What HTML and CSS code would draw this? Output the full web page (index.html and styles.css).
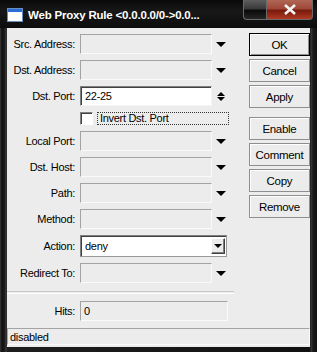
FILE: index.html
```html
<!DOCTYPE html>
<html>
<head>
	<title>Web Proxy Rule</title>
	<meta charset="utf-8">
	<link rel="stylesheet" href="styles.css">
</head>
<body>
	<div class="window">
		<div class="titlebar">
			<div class="appicon"></div>
			<div class="caption">Web Proxy Rule &lt;0.0.0.0/0-&gt;0.0...</div>
			<div class="capbtns">
				<div class="capbtn-min"></div>
				<div class="capbtn-close">
					<svg width="14" height="11" viewBox="0 0 14 11"><path d="M2 1 L12 10 M12 1 L2 10" stroke="#f4f4f4" stroke-width="2.6" fill="none"/></svg>
				</div>
			</div>
		</div>
		<div class="client">
			<div class="main">
				<div class="form">
					<div class="row">
						<label>Src. Address:</label>
						<div class="field off"></div>
						<div class="arrow"><span class="tri-down"></span></div>
					</div>
					<div class="row">
						<label>Dst. Address:</label>
						<div class="field off"></div>
						<div class="arrow"><span class="tri-down"></span></div>
					</div>
					<div class="row">
						<label>Dst. Port:</label>
						<div class="field on">22-25</div>
						<div class="arrow spin"><span class="tri-up"></span><span class="tri-down"></span></div>
					</div>
					<div class="row check-row">
						<label></label>
						<div class="checkbox"></div>
						<div class="focus">Invert Dst. Port</div>
					</div>
					<div class="row">
						<label>Local Port:</label>
						<div class="field off"></div>
						<div class="arrow"><span class="tri-down"></span></div>
					</div>
					<div class="row">
						<label>Dst. Host:</label>
						<div class="field off"></div>
						<div class="arrow"><span class="tri-down"></span></div>
					</div>
					<div class="row">
						<label>Path:</label>
						<div class="field off"></div>
						<div class="arrow"><span class="tri-down"></span></div>
					</div>
					<div class="row">
						<label>Method:</label>
						<div class="field off"></div>
						<div class="arrow"><span class="tri-down"></span></div>
					</div>
					<div class="row action-row">
						<label>Action:</label>
						<div class="combo">
							<span class="combo-text">deny</span>
							<span class="combo-btn"><span class="tri-small"></span></span>
						</div>
					</div>
					<div class="row">
						<label>Redirect To:</label>
						<div class="field off"></div>
						<div class="arrow"><span class="tri-down"></span></div>
					</div>
					<div class="sep"></div>
					<div class="row">
						<label>Hits:</label>
						<div class="field off wide">0</div>
					</div>
				</div>
				<div class="side">
					<div class="btn default">OK</div>
					<div class="btn">Cancel</div>
					<div class="btn">Apply</div>
					<div class="btn spaced">Enable</div>
					<div class="btn">Comment</div>
					<div class="btn">Copy</div>
					<div class="btn">Remove</div>
				</div>
			</div>
			<div class="status">disabled</div>
		</div>
	</div>
</body>
</html>
```
FILE: styles.css
```css
body {
	margin: 0;
	background: #000;
	font-family: "Liberation Sans", Arial, sans-serif;
}
.window {
	width: 317px;
	height: 352px;
	box-sizing: border-box;
	background: linear-gradient(90deg, #3a3a3a 0, #111 2px, #1e1e1e 5px, #444 6px, #1e1e1e 7px, #111 310px, #3a3a3a 311px, #1a1a1a 313px, #111 317px);
	display: flex;
	flex-direction: column;
}
.titlebar {
	height: 28px;
	display: flex;
	align-items: flex-start;
	background: linear-gradient(180deg, #0a0a0a 0, #181818 40%, #0c0c0c 100%);
}
.appicon {
	width: 14px;
	height: 9px;
	margin: 9px 0 0 8px;
	background: #fff;
	border-top: 3px solid #2a6fd6;
	box-shadow: 0 0 0 1px #6a8ec4;
}
.caption {
	color: #fff;
	font-weight: bold;
	font-size: 11.5px;
	margin: 9px 0 0 6px;
	letter-spacing: -0.2px;
	white-space: nowrap;
}
.capbtns {
	display: flex;
	margin-left: auto;
	margin-right: 4px;
}
.capbtn-min {
	width: 22px;
	height: 19px;
	border: 1px solid #6a6a6a;
	border-top: 0;
	border-right: 0;
	border-radius: 0 0 0 4px;
	background: linear-gradient(180deg, #5e5e5e 0, #3a3a3a 45%, #0a0a0a 55%, #262626 100%);
}
.capbtn-close {
	width: 45px;
	height: 19px;
	border: 1px solid #6a6a6a;
	border-top: 0;
	border-radius: 0 0 4px 0;
	background: linear-gradient(180deg, #b06656 0, #a04838 45%, #7a1a0c 55%, #b03a24 100%);
	display: flex;
	align-items: center;
	justify-content: center;
}
.client {
	margin: 0 7px 5px 7px;
	height: 319px;
	background: #ececec;
	display: flex;
	flex-direction: column;
	font-size: 11px;
	letter-spacing: -0.3px;
	color: #000;
}
.main {
	display: flex;
	flex: 1;
}
.form {
	width: 238px;
	padding-top: 6px;
	display: flex;
	flex-direction: column;
	gap: 6px;
}
.row {
	display: flex;
	align-items: center;
	height: 20px;
}
.row label {
	width: 68px;
	margin-right: 5px;
	text-align: right;
	flex-shrink: 0;
}
.field {
	width: 132px;
	height: 20px;
	box-sizing: border-box;
	border: 1px solid;
	padding: 3px 0 0 3px;
	white-space: nowrap;
}
.field.off {
	border-color: #a3a3a3 #fafafa #fafafa #a3a3a3;
	background: #ececec;
}
.field.wide {
	width: 148px;
}
.field.on {
	background: #fff;
	border-color: #7f7f7f #f4f4f4 #f4f4f4 #7f7f7f;
	box-shadow: inset 1px 1px #404040;
	padding-left: 4px;
}
.arrow {
	width: 17px;
	height: 20px;
	display: flex;
	flex-direction: column;
	align-items: center;
	justify-content: center;
}
.tri-down {
	width: 0;
	height: 0;
	border-left: 5px solid transparent;
	border-right: 5px solid transparent;
	border-top: 5px solid #000;
}
.tri-up {
	width: 0;
	height: 0;
	border-left: 4px solid transparent;
	border-right: 4px solid transparent;
	border-bottom: 4px solid #000;
	margin-bottom: 1px;
}
.spin .tri-down {
	border-left-width: 4px;
	border-right-width: 4px;
	border-top-width: 4px;
}
.check-row {
	height: 13px;
}
.checkbox {
	width: 13px;
	height: 13px;
	box-sizing: border-box;
	background: #fff;
	border: 1px solid;
	border-color: #808080 #fff #fff #808080;
	box-shadow: inset 1px 1px #404040;
}
.focus {
	margin-left: 4px;
	width: 132px;
	height: 13px;
	box-sizing: border-box;
	border: 1px dotted #333;
	padding-left: 2px;
	line-height: 11px;
}
.action-row {
	height: 22px;
}
.combo {
	width: 147px;
	height: 22px;
	box-sizing: border-box;
	background: #fff;
	border: 1px solid;
	border-color: #7f7f7f #9a9a9a #9a9a9a #7f7f7f;
	box-shadow: inset 1px 1px #404040;
	display: flex;
	align-items: center;
	padding: 0 1px 0 4px;
}
.combo-text {
	flex: 1;
}
.combo-btn {
	width: 14px;
	height: 16px;
	box-sizing: border-box;
	background: #ececec;
	border: 1px solid;
	border-color: #fff #404040 #404040 #fff;
	box-shadow: inset -1px -1px #808080;
	display: flex;
	align-items: center;
	justify-content: center;
}
.tri-small {
	width: 0;
	height: 0;
	border-left: 4px solid transparent;
	border-right: 4px solid transparent;
	border-top: 4px solid #000;
}
.sep {
	height: 1px;
	margin: 2px 8px 1px 0;
	border-top: 1px solid #c8c8c8;
	border-bottom: 1px solid #fff;
}
.side {
	width: 62px;
	margin-left: 7px;
	padding-top: 5px;
	display: flex;
	flex-direction: column;
	gap: 3px;
}
.btn {
	height: 23px;
	box-sizing: border-box;
	border: 1px solid #8e8e8e;
	box-shadow: inset 1px 1px #fff;
	background: #ececec;
	display: flex;
	align-items: center;
	justify-content: center;
	font-size: 11.5px;
}
.btn.default {
	border-color: #000;
	box-shadow: inset 1px 1px #fff, inset -1px -1px #8e8e8e;
}
.btn.spaced {
	margin-top: 6px;
}
.status {
	height: 17px;
	box-sizing: border-box;
	margin-bottom: 2px;
	border: 1px solid;
	border-color: #a3a3a3 #fafafa #fafafa #a3a3a3;
	padding: 2px 0 0 2px;
	white-space: nowrap;
}
```
